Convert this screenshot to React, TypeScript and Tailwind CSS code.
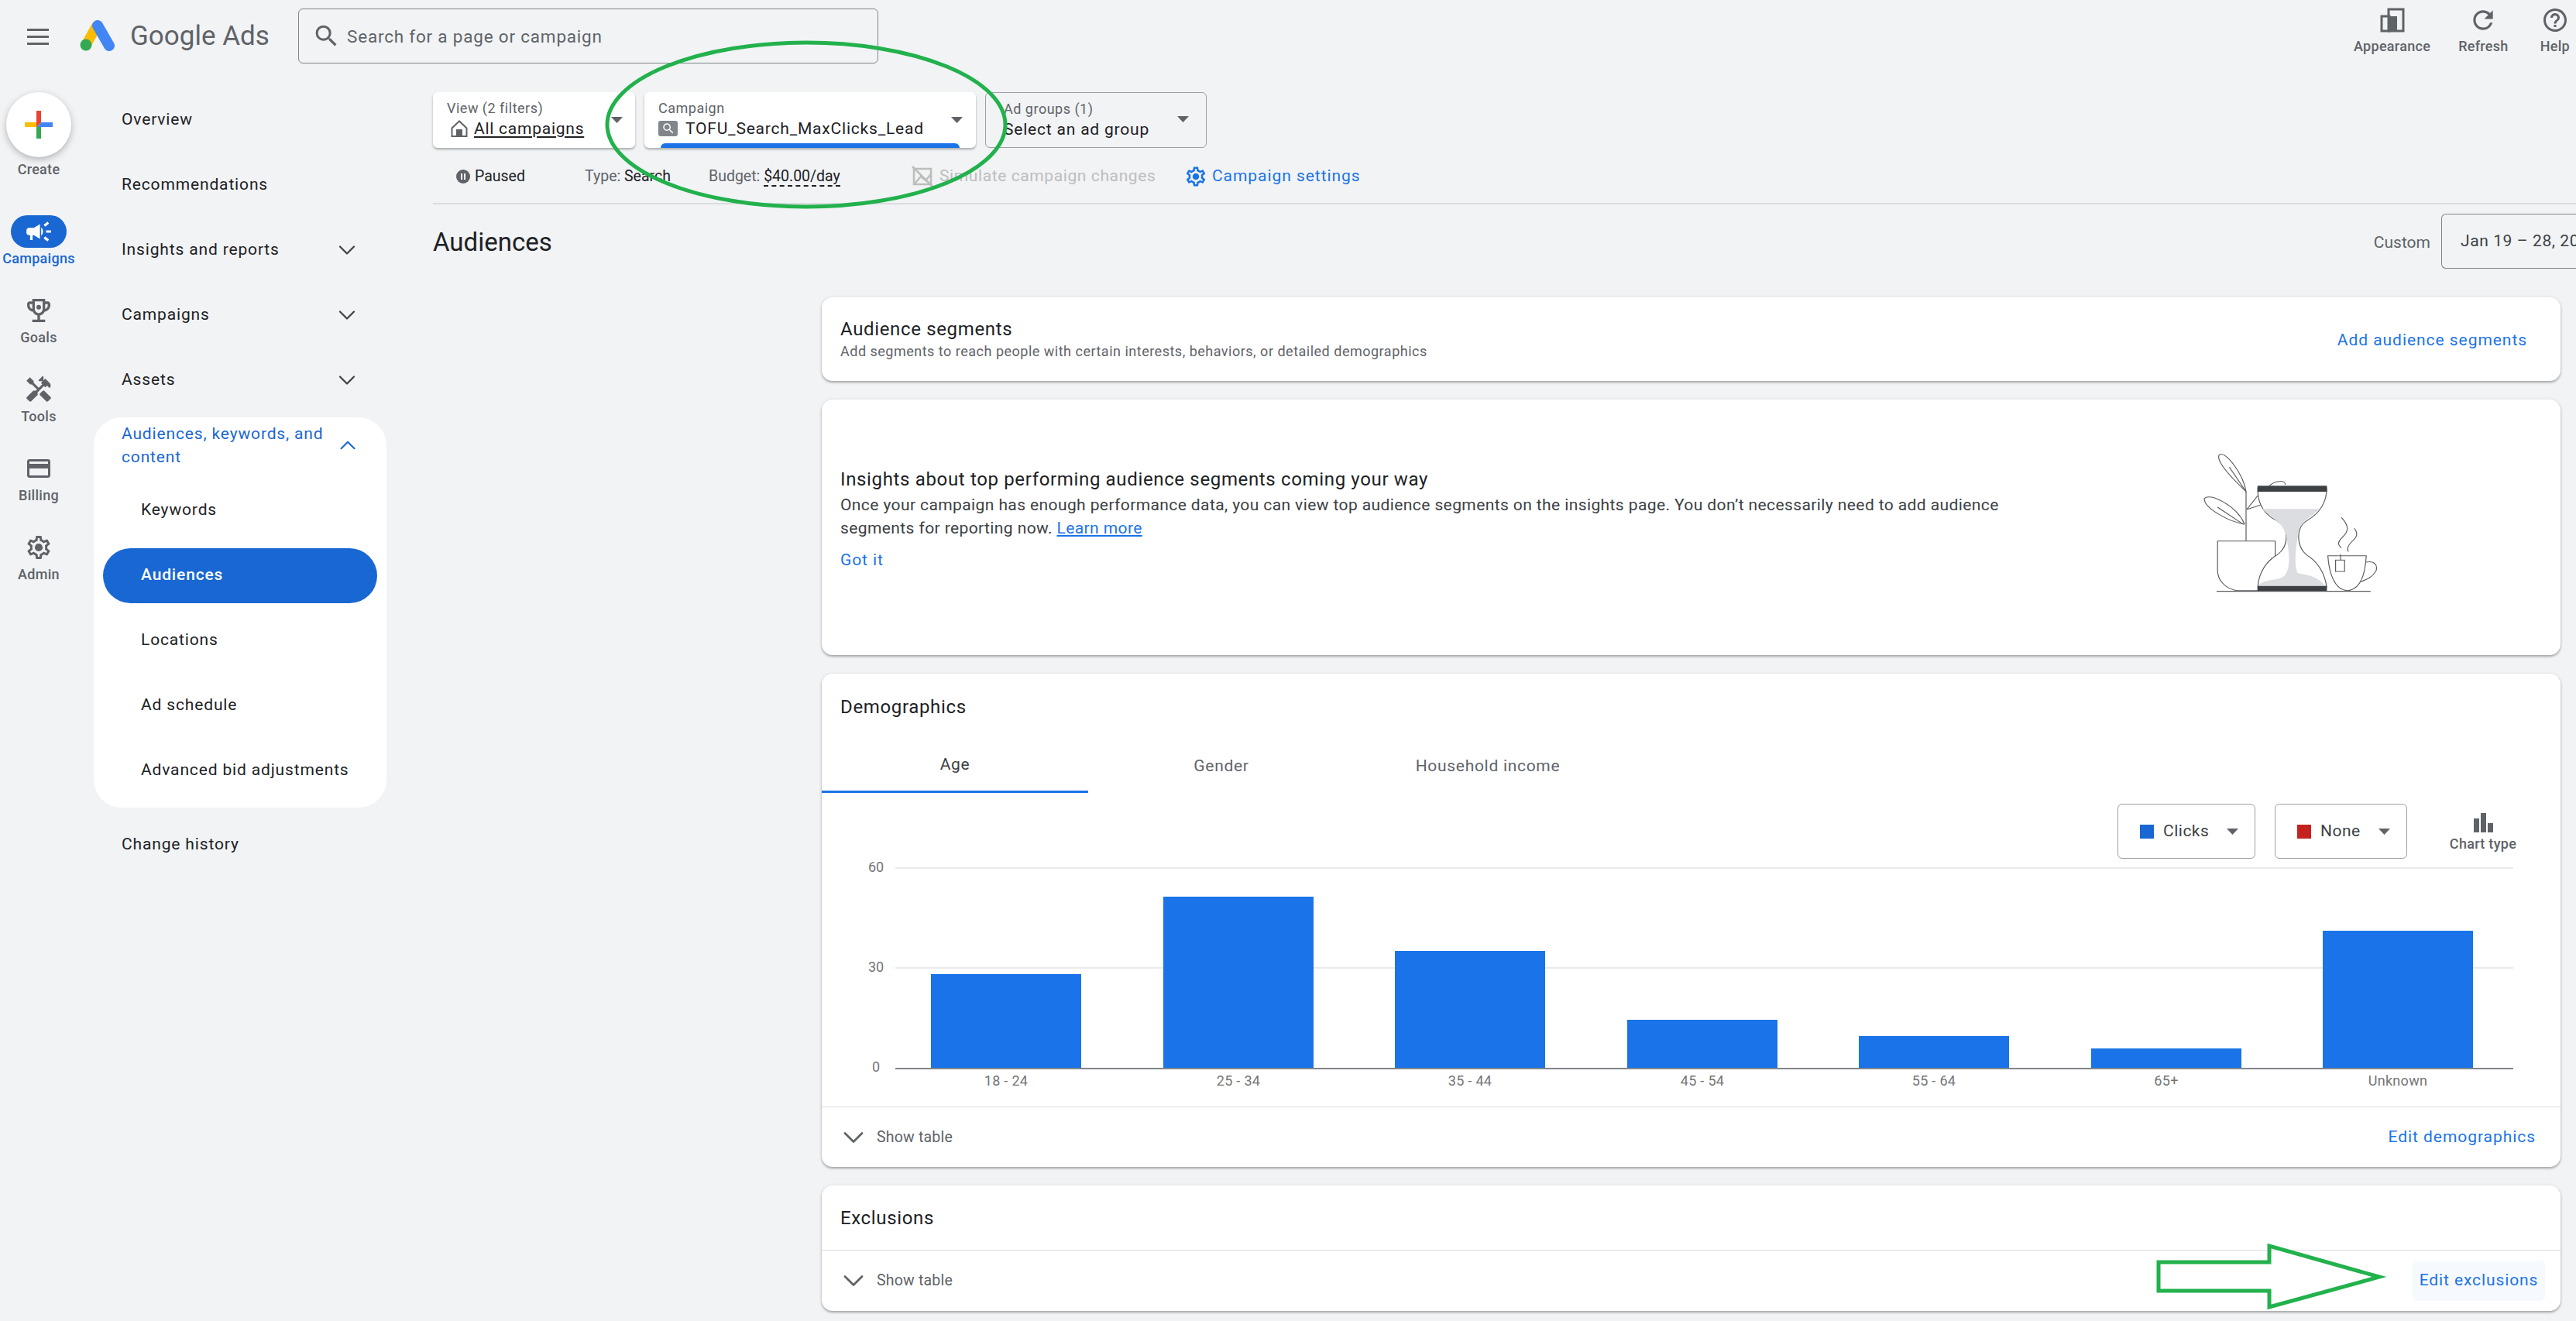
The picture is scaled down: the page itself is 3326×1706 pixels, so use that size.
import { ChevronDown, ChevronUp } from "lucide-react";
import {
  MdCampaign,
  MdHandyman,
  MdHelpOutline,
  MdOutlineCreditCard,
  MdRefresh,
  MdSearch,
} from "react-icons/md";

const gearPath =
  "M19.43 12.98c.04-.32.07-.64.07-.98 0-.34-.03-.66-.07-.98l2.11-1.65c.19-.15.24-.42.12-.64l-2-3.46c-.09-.16-.26-.25-.44-.25-.06 0-.12.01-.17.03l-2.49 1c-.52-.4-1.08-.73-1.69-.98l-.38-2.65C14.46 2.18 14.25 2 14 2h-4c-.25 0-.46.18-.49.42l-.38 2.65c-.61.25-1.17.59-1.69.98l-2.49-1c-.06-.02-.12-.03-.18-.03-.17 0-.34.09-.43.25l-2 3.46c-.13.22-.07.49.12.64l2.11 1.65c-.04.32-.07.65-.07.98 0 .33.03.66.07.98l-2.11 1.65c-.19.15-.24.42-.12.64l2 3.46c.09.16.26.25.44.25.06 0 .12-.01.17-.03l2.49-1c.52.4 1.08.73 1.69.98l.38 2.65c.03.24.24.42.49.42h4c.25 0 .46-.18.49-.42l.38-2.65c.61-.25 1.17-.59 1.69-.98l2.49 1c.06.02.12.03.18.03.17 0 .34-.09.43-.25l2-3.46c.12-.22.07-.49-.12-.64l-2.11-1.65zm-1.98-1.71c.04.31.05.52.05.73 0 .21-.02.43-.05.73l-.14 1.13.89.7 1.08.84-.7 1.21-1.27-.51-1.04-.42-.9.68c-.43.32-.84.56-1.25.73l-1.06.43-.16 1.13-.2 1.35h-1.4l-.19-1.35-.16-1.13-1.06-.43c-.43-.18-.83-.41-1.23-.71l-.91-.7-1.06.43-1.27.51-.7-1.21 1.08-.84.89-.7-.14-1.13c-.03-.31-.05-.54-.05-.74s.02-.43.05-.73l.14-1.13-.89-.7-1.08-.84.7-1.21 1.27.51 1.04.42.9-.68c.43-.32.84-.56 1.25-.73l1.06-.43.16-1.13.2-1.35h1.39l.19 1.35.16 1.13 1.06.43c.43.18.83.41 1.23.71l.91.7 1.06-.43 1.27-.51.7 1.21-1.07.85-.89.7.14 1.13z";

function Gear({ size, className }: { size: number; className?: string }) {
  return (
    <svg width={size} height={size} viewBox="0 0 24 24" fill="currentColor" className={className}>
      <path d={gearPath} />
      <circle cx="12" cy="12" r="3.4" />
    </svg>
  );
}

function Trophy() {
  return (
    <svg width="40" height="40" viewBox="0 0 24 24" fill="currentColor">
      <path d="M19 5h-2V3H7v2H5c-1.1 0-2 .9-2 2v1c0 2.55 1.92 4.63 4.39 4.94.63 1.5 1.98 2.63 3.61 2.96V19H7v2h10v-2h-4v-3.1c1.63-.33 2.98-1.46 3.61-2.96C19.08 12.63 21 10.55 21 8V7c0-1.1-.9-2-2-2zM5 8V7h2v3.82C5.84 10.4 5 9.3 5 8zm7 6c-1.65 0-3-1.35-3-3V5h6v6c0 1.65-1.35 3-3 3zm7-6c0 1.3-.84 2.4-2 2.82V7h2v1z" />
      <circle cx="12" cy="9.4" r="1.8" />
    </svg>
  );
}

function AdsLogo() {
  return (
    <svg width="46" height="42" viewBox="0 0 46 42">
      <line x1="8" y1="33" x2="22" y2="8" stroke="#fbbc04" strokeWidth="13" />
      <line x1="23" y1="8" x2="38" y2="34" stroke="#4285f4" strokeWidth="14" strokeLinecap="round" />
      <circle cx="8" cy="33" r="7.5" fill="#34a853" />
    </svg>
  );
}

function CreatePlus() {
  return (
    <svg width="36" height="36" viewBox="-18 -18 36 36">
      <polygon points="-18,-3 3,-3 -3,3 -18,3" fill="#fbbc04" />
      <polygon points="3,-3 18,-3 18,3 -3,3" fill="#4285f4" />
      <polygon points="-3,3 3,3 3,18 -3,18" fill="#34a853" />
      <polygon points="-3,-18 3,-18 3,-3 -3,3" fill="#ea4335" />
    </svg>
  );
}

function Caret() {
  return (
    <svg width="15" height="8" viewBox="0 0 15 8" className="shrink-0">
      <polygon points="0,0 15,0 7.5,8" fill="#5f6368" />
    </svg>
  );
}

function AppearanceIcon() {
  return (
    <svg width="32" height="32" viewBox="0 0 32 32" fill="none" stroke="currentColor" strokeWidth="3">
      <rect x="2" y="11" width="10" height="19" />
      <rect x="11" y="2" width="19" height="28" />
      <rect x="11" y="11" width="11" height="19" fill="currentColor" stroke="none" />
    </svg>
  );
}

function HomeIcon() {
  return (
    <svg width="24" height="24" viewBox="0 0 24 24" className="shrink-0">
      <path d="M12 2.5 2.5 11.5V22h19V11.5z" fill="none" stroke="#5f6368" strokeWidth="2" />
      <rect x="8" y="13" width="8" height="9" fill="#5f6368" />
    </svg>
  );
}

function SimulateIcon() {
  return (
    <svg width="28" height="28" viewBox="0 0 28 28" fill="none" stroke="#bdbdbd" strokeWidth="2.5">
      <rect x="3" y="4" width="22" height="20" />
      <path d="M1 1 27 27M4 23 12 14l6 5 7-8" />
    </svg>
  );
}

function ChartTypeIcon() {
  return (
    <svg width="25" height="25" viewBox="0 0 25 25" fill="#5f6368">
      <rect x="0" y="7" width="7" height="18" />
      <rect x="9" y="0" width="7" height="25" />
      <rect x="18" y="13" width="7" height="12" />
    </svg>
  );
}

// traced from the reference at 2.5x by 3x, hence the stretched viewBox
function HourglassArt() {
  return (
    <svg width="236" height="190" viewBox="350 120 590 570" preserveAspectRatio="none" fill="none" stroke="#5a5d60" strokeWidth="3">
      <path d="M500 285C470 250 405 175 412 145C425 115 490 210 500 285Z" fill="#fff" />
      <path d="M446 190 497 280" />
      <path d="M495 410C450 405 365 350 365 312C380 285 470 340 495 410Z" fill="#fff" />
      <path d="M408 345 492 412" />
      <path d="M500 285V476" />
      <path d="M502 354 538 300M502 354 548 336M575 262C590 245 625 235 627 258" />
      <path d="M408 476H594V535C560 560 540 610 538 668H470C430 660 408 625 408 590Z" fill="#fff" />
      <path d="M538 270H760V285C755 350 720 380 695 398C660 425 662 495 695 530C730 555 755 600 760 655H538C540 600 565 555 600 530C640 495 640 425 600 398C570 380 540 350 538 285Z" fill="#fff" />
      <path d="M552 352H738C710 385 675 395 668 450C660 510 655 560 665 598C680 610 720 600 755 648H540C560 620 600 635 625 610C645 580 640 520 630 460C625 410 590 395 552 352Z" fill="#dcdde1" stroke="none" />
      <rect x="537" y="262" width="224" height="23" fill="#3c4043" stroke="none" />
      <rect x="537" y="650" width="224" height="21" fill="#3c4043" stroke="none" />
      <path d="M764 533H888C885 600 870 665 826 668C785 665 768 600 764 533Z" fill="#fff" />
      <path d="M888 558C915 552 925 570 920 590C910 615 890 625 870 634" />
      <rect x="789" y="550" width="29" height="44" />
      <path d="M805 550V527" />
      <path d="M808 385C835 420 830 440 812 460C795 480 795 490 808 503M849 427C865 450 855 465 840 480C828 495 825 505 830 517" />
      <path d="M405 671H902" stroke="#5a5d60" strokeWidth="4" />
    </svg>
  );
}

const railItems = [
  { label: "Goals", icon: <Trophy /> },
  { label: "Tools", icon: <MdHandyman size={38} /> },
  { label: "Billing", icon: <MdOutlineCreditCard size={36} /> },
  { label: "Admin", icon: <Gear size={36} /> },
];

const topNav = [
  { label: "Overview" },
  { label: "Recommendations" },
  { label: "Insights and reports", more: true },
  { label: "Campaigns", more: true },
  { label: "Assets", more: true },
];

const subNav = ["Keywords", "Audiences", "Locations", "Ad schedule", "Advanced bid adjustments"];

const bars = [
  { label: "18 - 24", x: 1202, h: 121 },
  { label: "25 - 34", x: 1502, h: 221 },
  { label: "35 - 44", x: 1801, h: 151 },
  { label: "45 - 54", x: 2101, h: 62 },
  { label: "55 - 64", x: 2400, h: 41 },
  { label: "65+", x: 2700, h: 25 },
  { label: "Unknown", x: 2999, h: 177 },
];

function Header() {
  return (
    <header className="flex h-[94px] items-start">
      <div className="ml-[35px] mt-[37px] flex w-[28px] flex-col gap-[6px]">
        <span className="h-[3px] bg-[#5f6368]" />
        <span className="h-[3px] bg-[#5f6368]" />
        <span className="h-[3px] bg-[#5f6368]" />
      </div>
      <div className="ml-[40px] mt-[25px]">
        <AdsLogo />
      </div>
      <span className="ml-[19px] mt-[24px] w-[178px] whitespace-nowrap text-[35px] leading-[46px] text-[#5f6368]">Google Ads</span>
      <div className="ml-[39px] mt-[11px] flex h-[71px] w-[749px] items-center rounded-[6px] border-[1.5px] border-[#80868b] pl-[17px]">
        <MdSearch size={37} className="text-[#5f6368]" />
        <span className="ml-[8px] mt-[2px] text-[22.5px] tracking-[0.8px] text-[#5f6368]">Search for a page or campaign</span>
      </div>
      <div className="ml-auto mr-[8px] flex pt-[8px] text-[18px] font-medium tracking-[0.3px] text-[#5f6368]">
        <TopAction label="Appearance" icon={<AppearanceIcon />} />
        <div className="ml-[36px]">
          <TopAction label="Refresh" icon={<MdRefresh size={38} />} />
        </div>
        <div className="ml-[41px]">
          <TopAction label="Help" icon={<MdHelpOutline size={36} />} />
        </div>
      </div>
    </header>
  );
}

function TopAction({ label, icon }: { label: string; icon: React.ReactNode }) {
  return (
    <div className="flex flex-col items-center">
      <div className="flex h-[36px] items-center justify-center">{icon}</div>
      <span className="mt-[4px] leading-[24px]">{label}</span>
    </div>
  );
}

function Rail() {
  return (
    <aside className="flex w-[100px] shrink-0 flex-col items-center pt-[25px] text-[18px] font-medium tracking-[0.3px] text-[#5f6368]">
      <div className="flex h-[84px] w-[84px] items-center justify-center rounded-full bg-white shadow-[0_3px_8px_rgba(60,64,67,0.35)]">
        <CreatePlus />
      </div>
      <span className="mt-[3px] leading-[26px]">Create</span>
      <div className="mt-[46px] flex h-[102px] flex-col items-center">
        <div className="flex h-[42px] w-[72px] items-center justify-center rounded-full bg-[#1967d2] text-white">
          <MdCampaign size={38} />
        </div>
        <span className="mt-[1px] leading-[26px] text-[#1967d2]">Campaigns</span>
      </div>
      {railItems.map((item) => (
        <div key={item.label} className="flex h-[102px] flex-col items-center">
          <div className="flex h-[42px] items-center justify-center">{item.icon}</div>
          <span className="mt-[1px] leading-[26px]">{item.label}</span>
        </div>
      ))}
    </aside>
  );
}

function Nav() {
  return (
    <nav className="w-[459px] shrink-0 pl-[21px] pt-[19px] text-[21px] tracking-[0.85px] text-[#202124]">
      <div className="w-[378px]">
        {topNav.map((item) => (
          <div key={item.label} className="flex h-[84px] items-center justify-between pl-[36px] pr-[33px]">
            <span>{item.label}</span>
            {item.more ? <ChevronDown size={36} strokeWidth={1.45} className="text-[#3c4043]" /> : null}
          </div>
        ))}
        <div className="mt-[6px] rounded-[36px] bg-white pb-[6px] pt-[6px]">
          <div className="mb-[12px] flex items-center justify-between pl-[36px] pr-[33px] text-[#1967d2]">
            <span className="w-[290px] leading-[30px]">Audiences, keywords, and content</span>
            <ChevronUp size={36} strokeWidth={1.45} />
          </div>
          {subNav.map((name) =>
            name === "Audiences" ? (
              <div key={name} className="flex h-[84px] items-center px-[12px]">
                <span className="flex h-[71px] w-full items-center rounded-full bg-[#1967d2] pl-[49px] font-medium text-white">{name}</span>
              </div>
            ) : (
              <div key={name} className="flex h-[84px] items-center pl-[61px]">
                {name}
              </div>
            ),
          )}
        </div>
        <div className="mt-[6px] flex h-[84px] items-center pl-[36px]">Change history</div>
      </div>
    </nav>
  );
}

function Filters() {
  return (
    <div className="flex gap-[12px]">
      <div className="flex h-[72px] w-[261px] rounded-[6px] bg-white pl-[18px] pr-[16px] shadow-[0_2px_3px_rgba(60,64,67,0.4)]">
        <div className="flex-1 pt-[9px]">
          <div className="text-[18px] leading-[24px] tracking-[0.5px] text-[#5f6368]">View (2 filters)</div>
          <div className="mt-[1px] flex items-center gap-[7px] pl-[4px] text-[21px] leading-[26px] tracking-[0.75px] text-[#202124]">
            <HomeIcon />
            <span className="underline underline-offset-[3px]">All campaigns</span>
          </div>
        </div>
        <div className="pt-[32px]">
          <Caret />
        </div>
      </div>
      <div className="relative flex h-[72px] w-[428px] rounded-[6px] bg-white pl-[18px] pr-[17px] shadow-[0_2px_3px_rgba(60,64,67,0.4)]">
        <div className="flex-1 pt-[9px]">
          <div className="text-[18px] leading-[24px] tracking-[0.5px] text-[#5f6368]">Campaign</div>
          <div className="mt-[1px] flex items-center gap-[10px] text-[21px] leading-[26px] tracking-[0.8px] text-[#202124]">
            <span className="flex h-[20px] w-[25px] items-center justify-center rounded-[3px] bg-[#80868b] text-white">
              <MdSearch size={18} />
            </span>
            <span>TOFU_Search_MaxClicks_Lead</span>
          </div>
        </div>
        <div className="pt-[32px]">
          <Caret />
        </div>
        <span className="absolute bottom-0 left-[21px] h-[6px] w-[386px] rounded-t-[6px] bg-[#1a73e8]" />
      </div>
      <div className="flex h-[72px] w-[286px] rounded-[6px] border-[1.5px] border-[#9aa0a6] pl-[23px] pr-[22px]">
        <div className="flex-1 pt-[9px]">
          <div className="text-[18px] leading-[24px] tracking-[0.5px] text-[#5f6368]">Ad groups (1)</div>
          <div className="mt-[1px] text-[21px] leading-[26px] tracking-[0.8px] text-[#202124]">Select an ad group</div>
        </div>
        <div className="pt-[30px]">
          <Caret />
        </div>
      </div>
    </div>
  );
}

function StatusRow() {
  return (
    <div className="flex h-[73px] items-center border-b-2 border-[#dadce0] pt-[2px] text-[19.5px] text-[#5f6368]">
      <span className="ml-[30px] flex h-[18px] w-[18px] items-center justify-center gap-[2px] rounded-full bg-[#5f6368]">
        <span className="h-[8px] w-[2px] bg-white" />
        <span className="h-[8px] w-[2px] bg-white" />
      </span>
      <span className="ml-[6px] w-[142px] text-[#202124]">Paused</span>
      <span className="w-[160px]">
        Type: <span className="text-[#202124]">Search</span>
      </span>
      <span className="w-[262px]">
        Budget: <span className="border-b-2 border-dashed border-[#202124] text-[#202124]">$40.00/day</span>
      </span>
      <SimulateIcon />
      <span className="ml-[8px] w-[316px] text-[21px] tracking-[0.6px] text-[#bdbdbd]">Simulate campaign changes</span>
      <Gear size={30} className="text-[#1a73e8]" />
      <span className="ml-[6px] text-[21px] tracking-[0.95px] text-[#1a73e8]">Campaign settings</span>
    </div>
  );
}

function TitleRow() {
  return (
    <div className="flex items-start justify-between pt-[12px]">
      <h1 className="mt-[14px] text-[33px] leading-[46px] text-[#202124]">Audiences</h1>
      <div className="flex items-start">
        <span className="mt-[23px] text-[21px] leading-[28px] text-[#5f6368]">Custom</span>
        <div className="ml-[14px] flex h-[71px] w-[174px] items-center overflow-hidden whitespace-nowrap rounded-l-[6px] border-y-[1.5px] border-l-[1.5px] border-[#80868b] pl-[24px] text-[21px] tracking-[0.6px] text-[#3c4043]">
          Jan 19 – 28, 2024
        </div>
      </div>
    </div>
  );
}

function Card({ className, children }: { className?: string; children: React.ReactNode }) {
  return <section className={`rounded-[14px] bg-white shadow-[0_2px_3px_rgba(60,64,67,0.4),0_0_4px_rgba(60,64,67,0.1)] ${className ?? ""}`}>{children}</section>;
}

function ShowTable() {
  return (
    <span className="flex items-center text-[19.5px] tracking-[0.2px] text-[#5f6368]">
      <ChevronDown size={44} strokeWidth={1.5} className="ml-[19px] text-[#5f6368]" />
      <span className="ml-[8px]">Show table</span>
    </span>
  );
}

function MetricSelect({ name, color, width }: { name: string; color: string; width: string }) {
  return (
    <div className={`flex h-[71px] items-center rounded-[6px] border-[1.5px] border-[#9aa0a6] pl-[28px] text-[21px] tracking-[0.5px] text-[#3c4043] ${width}`}>
      <span className={`h-[18px] w-[18px] ${color}`} />
      <span className="ml-[12px] flex-1">{name}</span>
      <span className="mr-[21px]">
        <Caret />
      </span>
    </div>
  );
}

function Chart() {
  const ox = 1110;
  const ox2 = 3245;
  return (
    <svg width="2136" height="320" viewBox={`${ox} 1109 ${ox2 - ox + 1} 320`} className="ml-[49px] block">
      <line x1="1156" x2={ox2} y1="1121" y2="1121" stroke="#e8eaed" strokeWidth="2" />
      <line x1="1156" x2={ox2} y1="1250" y2="1250" stroke="#e8eaed" strokeWidth="2" />
      {bars.map((b) => (
        <g key={b.label}>
          <rect x={b.x} y={1379 - b.h} width={194} height={b.h} fill="#1a73e8" />
          <text x={b.x + 97} y="1402" textAnchor="middle" fontSize="18" letterSpacing="0.3" fill="#757575">
            {b.label}
          </text>
        </g>
      ))}
      <line x1="1156" x2={ox2} y1="1380" y2="1380" stroke="#80868b" strokeWidth="2" />
      <text x="1131" y="1126" textAnchor="middle" fontSize="18" fill="#757575">60</text>
      <text x="1131" y="1255" textAnchor="middle" fontSize="18" fill="#757575">30</text>
      <text x="1131" y="1384" textAnchor="middle" fontSize="18" fill="#757575">0</text>
    </svg>
  );
}

function Cards() {
  return (
    <div className="ml-[502px] mr-[20px] mt-[37px] flex flex-col gap-[24px]">
      <Card className="flex h-[108px] items-center justify-between pl-[24px] pr-[43px]">
        <div>
          <div className="text-[24px] leading-[30px] tracking-[0.65px] text-[#202124]">Audience segments</div>
          <div className="mt-[2px] text-[18px] leading-[24px] tracking-[0.5px] text-[#5f6368]">Add segments to reach people with certain interests, behaviors, or detailed demographics</div>
        </div>
        <span className="mt-[4px] text-[21px] tracking-[0.95px] text-[#1a73e8]">Add audience segments</span>
      </Card>

      <Card className="flex h-[330px] justify-between pl-[24px] pr-[230px]">
        <div className="pt-[88px]">
          <div className="text-[24px] leading-[30px] tracking-[0.65px] text-[#202124]">Insights about top performing audience segments coming your way</div>
          <p className="mt-[3px] text-[21px] leading-[30px] tracking-[0.4px] text-[#3c4043]">
            Once your campaign has enough performance data, you can view top audience segments on the insights page. You don’t necessarily need to add audience
            <br />
            segments for reporting now. <span className="text-[#1a73e8] underline">Learn more</span>
          </p>
          <div className="mt-[11px] text-[21px] leading-[30px] tracking-[0.9px] text-[#1a73e8]">Got it</div>
        </div>
        <div className="mt-[64px]">
          <HourglassArt />
        </div>
      </Card>

      <Card className="h-[637px]">
        <div className="flex h-[85px] items-center pl-[24px] text-[24px] tracking-[0.65px] text-[#202124]">Demographics</div>
        <div className="flex h-[69px] text-[21px] tracking-[0.7px] text-[#5f6368]">
          <div className="flex w-[344px] items-center justify-center border-b-[3px] border-[#1a73e8] text-[#3c4043]">Age</div>
          <div className="flex w-[344px] items-center justify-center">Gender</div>
          <div className="flex w-[344px] items-center justify-center">Household income</div>
        </div>
        <div className="mt-[14px] flex justify-end gap-[25px] pr-[51px]">
          <MetricSelect name="Clicks" color="bg-[#1967d2]" width="w-[178px]" />
          <MetricSelect name="None" color="bg-[#c5221f]" width="w-[171px]" />
          <div className="ml-[24px] flex w-[98px] flex-col items-center pt-[12px]">
            <ChartTypeIcon />
            <span className="mt-[3px] whitespace-nowrap text-[18px] font-medium leading-[24px] tracking-[0.3px] text-[#5f6368]">Chart type</span>
          </div>
        </div>
        <Chart />
        <div className="flex h-[78px] items-center justify-between border-t-[1.5px] border-[#dadce0] pr-[32px]">
          <ShowTable />
          <span className="text-[21px] tracking-[0.95px] text-[#1a73e8]">Edit demographics</span>
        </div>
      </Card>

      <Card className="h-[162px]">
        <div className="flex h-[84px] items-center border-b-[1.5px] border-[#dadce0] pl-[24px] text-[24px] tracking-[0.65px] text-[#202124]">Exclusions</div>
        <div className="flex h-[78px] items-center justify-between pr-[20px]">
          <ShowTable />
          <span className="flex h-[52px] w-[171px] items-center justify-center rounded-[6px] bg-[#f6f9fe] text-[21px] tracking-[0.9px] text-[#1a73e8]">Edit exclusions</span>
        </div>
      </Card>
    </div>
  );
}

function Annotations() {
  return (
    <svg width="3326" height="1706" viewBox="0 0 3326 1706" fill="none" stroke="#22b14c" strokeWidth="5" className="pointer-events-none absolute left-0 top-0">
      <ellipse cx="1041" cy="161" rx="257" ry="106" />
      <polygon points="2787,1630 2930,1630 2930,1609 3072,1649 2930,1688 2930,1667 2787,1667" strokeLinejoin="miter" />
    </svg>
  );
}

export default function App() {
  return (
    <div className="relative h-[1706px] w-[3326px] overflow-hidden bg-[#f1f3f5] font-['Roboto',sans-serif]">
      <Header />
      <div className="flex">
        <Rail />
        <Nav />
        <main className="min-w-0 flex-1 pt-[25px]">
          <Filters />
          <StatusRow />
          <TitleRow />
          <Cards />
        </main>
      </div>
      <Annotations />
    </div>
  );
}
